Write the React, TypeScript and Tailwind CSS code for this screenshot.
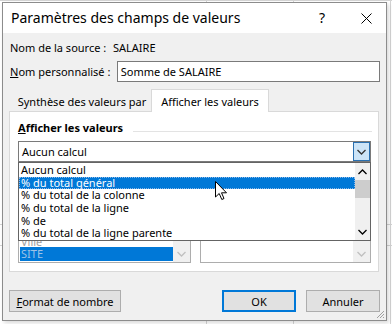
import React from 'react';

const ITEMS = ['Aucun calcul', '% du total général', '% du total de la colonne', '% du total de la ligne', '% de', '% du total de la ligne parente'];

const Chevron = ({ up = false, color = '#000' }: { up?: boolean; color?: string }) => (
  <svg width="9" height="6" viewBox="0 0 9 6" className="block">
    <path d={up ? 'M0.5 5 L4.5 1 L8.5 5' : 'M0.5 1 L4.5 5 L8.5 1'} fill="none" stroke={color} strokeWidth="1.3" />
  </svg>
);

export default function App() {
  return (
    <div className="relative h-[324px] w-[392px] overflow-hidden bg-white font-['Noto_Sans',sans-serif] text-[11px] leading-none text-black">
      {/* feuille Excel en arrière-plan */}
      <div className="pointer-events-none absolute inset-0">
        <div className="absolute left-[390px] top-0 h-full w-px bg-[#d4d4d4]" />
        <div className="absolute left-[206px] top-0 h-full w-px bg-[#d4d4d4]" />
        <div className="absolute left-[293px] top-0 h-full w-px bg-[#d4d4d4]" />
        <div className="absolute left-0 top-[0px] h-px w-full bg-[#d4d4d4]" />
        <div className="absolute left-0 top-[224px] h-px w-full bg-[#d4d4d4]" />
        <div className="absolute left-0 top-[245px] h-px w-full bg-[#d4d4d4]" />
      </div>

      <div className="relative ml-[2px] mt-[2px] flex h-[319px] w-[385px] flex-col border border-[#8c8c8c] bg-[#f0f0f0] shadow-[2px_2px_4px_rgba(0,0,0,0.15)]">
        {/* barre de titre */}
        <div className="flex h-[30px] shrink-0 items-center bg-white pl-[8px]">
          <span className="text-[14px]">Paramètres des champs de valeurs</span>
          <span className="ml-auto mr-[36px] text-[14px]">?</span>
          <svg width="11" height="11" viewBox="0 0 11 11" className="mr-[14px]">
            <path d="M0.5 0.5 L10.5 10.5 M10.5 0.5 L0.5 10.5" stroke="#000" strokeWidth="1" />
          </svg>
        </div>

        <div className="flex flex-1 flex-col pl-[6px] pr-[6px]">
          <div className="mt-[4px] flex h-[20px] items-center pl-[1px]">
            <span className="w-[103px] whitespace-nowrap">Nom de la source :</span>
            <span>SALAIRE</span>
          </div>
          <div className="mt-[4px] flex h-[21px] items-center pl-[1px]">
            <span className="w-[107px] whitespace-nowrap"><span className="underline">N</span>om personnalisé :</span>
            <div className="flex h-[21px] w-[264px] items-center border border-[#7a7a7a] bg-white pl-[3px]">Somme de SALAIRE</div>
          </div>

          {/* onglets */}
          <div className="mt-[7px] flex h-[22px] items-end">
            <div className="flex h-[20px] w-[142px] items-center justify-center whitespace-nowrap pl-[4px]">Synthèse des valeurs par</div>
            <div className="relative z-10 -mb-px flex h-[23px] w-[118px] items-center justify-center whitespace-nowrap border border-b-0 border-[#d9d9d9] bg-white">Afficher les valeurs</div>
          </div>

          {/* panneau */}
          <div className="relative flex h-[161px] w-[370px] flex-col border border-[#d9d9d9] bg-white pl-[8px]">
            <div className="mt-[7px] flex h-[16px] items-center">
              <span className="font-bold"><span className="underline">A</span>fficher les valeurs</span>
              <div className="ml-[10px] mr-[6px] mt-[9px] h-px flex-1 bg-[#e3e3e3]" />
            </div>
            <div className="mt-[6px] flex h-[21px] w-[353px] items-center border border-[#7a7a7a] bg-white">
              <span className="flex-1 pl-[3px]">Aucun calcul</span>
              <div className="flex h-[19px] w-[17px] items-center justify-center border border-[#2a70b0] bg-[#cce4f7]">
                <Chevron color="#333" />
              </div>
            </div>

            <div className="mt-[38px] flex gap-[9px]">
              <div className="flex h-[63px] w-[173px] border border-[#adadad] bg-white">
                <div className="flex flex-1 flex-col justify-end pb-[1px] pl-[1px] text-[#a0a0a0]">
                  <div className="h-[13px] pl-[1px] leading-[16px]">Ville</div>
                  <div className="h-[14px] bg-[#0078d7] pl-[1px] leading-[14px] text-[#9fc3e6]">SITE</div>
                </div>
                <div className="flex w-[17px] items-end justify-center bg-[#f0f0f0] pb-[5px]">
                  <Chevron color="#c0c0c0" />
                </div>
              </div>
              <div className="flex h-[63px] w-[171px] border border-[#adadad] bg-white">
                <div className="flex-1" />
                <div className="flex w-[17px] items-end justify-center bg-[#f0f0f0] pb-[5px]">
                  <Chevron color="#c0c0c0" />
                </div>
              </div>
            </div>

            {/* liste déroulante ouverte */}
            <div className="absolute left-[8px] top-[50px] z-20 flex h-[79px] w-[353px] border border-[#646464] bg-white">
              <div className="flex flex-1 flex-col pt-[1px]">
                {ITEMS.map((it, i) => (
                  <div key={it} className={`h-[13px] whitespace-nowrap pl-[2px] leading-[12px] ${i === 1 ? 'bg-[#0078d7] text-white outline-1 outline-dotted outline-[#8bb8e8] -outline-offset-1' : ''}`}>{it}</div>
                ))}
              </div>
              <div className="flex w-[15px] flex-col items-center bg-[#f0f0f0]">
                <div className="flex h-[17px] items-center"><Chevron up color="#000" /></div>
                <div className="h-[18px] w-[15px] bg-[#cdcdcd]" />
                <div className="flex-1" />
                <div className="flex h-[17px] items-center"><Chevron color="#000" /></div>
              </div>
            </div>
          </div>

          {/* boutons */}
          <div className="mt-[18px] flex items-center">
            <button className="flex h-[22px] w-[112px] items-center justify-center border border-[#adadad] bg-[#e1e1e1]"><span className="underline">F</span>ormat de nombre</button>
            <button className="ml-auto flex h-[22px] w-[74px] items-center justify-center border-2 border-[#0078d7] bg-[#e1e1e1]">OK</button>
            <button className="ml-[10px] flex h-[22px] w-[74px] items-center justify-center border border-[#adadad] bg-[#e1e1e1]">Annuler</button>
          </div>
        </div>

        {/* poignée de redimensionnement */}
        <svg width="9" height="9" viewBox="0 0 9 9" className="absolute bottom-[1px] right-[1px]">
          <path d="M8 1 L1 8 M8 4 L4 8 M8 7 L7 8" stroke="#a0a0a0" strokeWidth="1" />
        </svg>

        {/* curseur */}
        <svg width="13" height="20" viewBox="0 0 13 20" className="absolute left-[212px] top-[178px] z-30">
          <path d="M0.5 0.5 L0.5 16 L4.2 12.5 L6.8 18.5 L9 17.5 L6.5 11.8 L11.5 11.8 Z" fill="#fff" stroke="#000" strokeWidth="1" strokeLinejoin="round" />
        </svg>
      </div>
    </div>
  );
}
